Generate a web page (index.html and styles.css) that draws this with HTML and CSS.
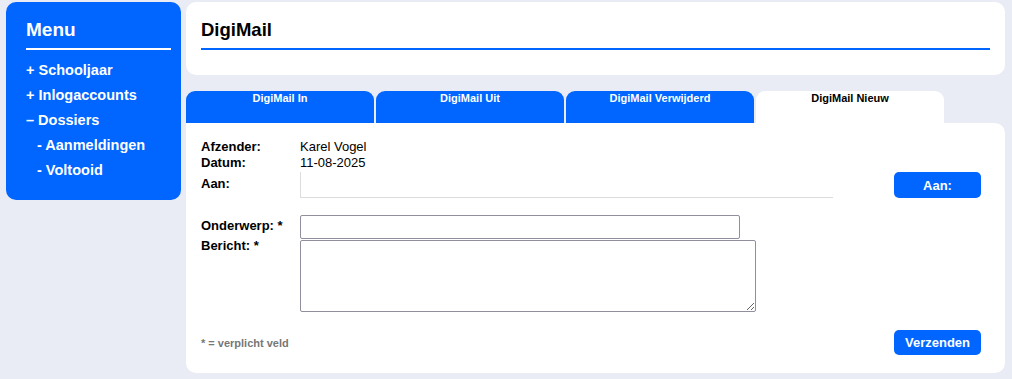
FILE: index.html
```html
<!DOCTYPE html>
<html lang="nl">
<head>
  <meta charset="UTF-8">
  <title>DigiMail Nieuw</title>
  <meta name="viewport" content="width=device-width, initial-scale=1.0">
  <link rel="stylesheet" href="styles.css">
</head>
<body>
  <nav class="sidebar">
    <h2>Menu</h2>
    <ul class="menu">
      <li>+ Schooljaar</li>
      <li>+ Inlogaccounts</li>
      <li>– Dossiers</li>
      <li class="sub">- Aanmeldingen</li>
      <li class="sub">- Voltooid</li>
    </ul>
  </nav>

  <main class="main">
    <section class="header-card">
      <h1>DigiMail</h1>
    </section>

    <div class="tabs">
      <div class="tab">DigiMail In</div>
      <div class="tab">DigiMail Uit</div>
      <div class="tab">DigiMail Verwijderd</div>
      <div class="tab active">DigiMail Nieuw</div>
    </div>

    <form class="mail-card" id="mailForm">
      <div class="info">
        <span class="label">Afzender:</span>
        <span>Karel Vogel</span>
        <span class="label">Datum:</span>
        <span>11-08-2025</span>
      </div>

      <div class="row aan-row">
        <span class="label">Aan:</span>
        <div class="aan-field"></div>
        <button type="button" class="btn">Aan:</button>
      </div>

      <div class="row subject-row">
        <label class="label" for="subject">Onderwerp: *</label>
        <input type="text" id="subject" name="subject">
      </div>

      <div class="row message-row">
        <label class="label" for="message">Bericht: *</label>
        <textarea id="message" name="message"></textarea>
      </div>

      <div class="footer-row">
        <span class="hint">* = verplicht veld</span>
        <button type="submit" class="btn">Verzenden</button>
      </div>
    </form>
  </main>
</body>
</html>
```

FILE: styles.css
```css
body {
  margin: 0;
  padding: 2px 7px 0 6px;
  background-color: #e9ecf5;
  font-family: "Liberation Sans", Arial, sans-serif;
  color: #000;
  display: flex;
  align-items: flex-start;
  gap: 5px;
}

/* sidebar */
.sidebar {
  width: 175px;
  box-sizing: border-box;
  background-color: #0066ff;
  color: #fff;
  border-radius: 10px;
  padding: 16px 10px 17px 20px;
}
.sidebar h2 {
  margin: 0;
  font-size: 19px;
  line-height: 24px;
  padding-bottom: 6px;
  border-bottom: 2px solid #fff;
}
.menu {
  list-style: none;
  margin: 8px 0 0 0;
  padding: 0;
}
.menu li {
  font-size: 14.5px;
  font-weight: bold;
  line-height: 25px;
}
.menu li.sub {
  padding-left: 11px;
}

/* main column */
.main {
  flex: 1;
}
.header-card {
  background-color: #fff;
  border-radius: 10px;
  padding: 17px 15px 25px 15px;
}
.header-card h1 {
  margin: 0;
  font-size: 18.5px;
  line-height: 22px;
  padding-bottom: 7px;
  border-bottom: 2px solid #0066ff;
}

/* tabs */
.tabs {
  display: flex;
  gap: 2px;
  margin-top: 16px;
}
.tab {
  width: 188px;
  height: 32px;
  box-sizing: border-box;
  background-color: #0066ff;
  color: #fff;
  border-radius: 9px 9px 0 0;
  font-size: 11px;
  font-weight: bold;
  text-align: center;
  padding-top: 1px;
  line-height: 13px;
}
.tab.active {
  background-color: #fff;
  color: #000;
}

/* form card */
.mail-card {
  background-color: #fff;
  border-radius: 0 10px 10px 10px;
  padding: 16px 24px 18px 15px;
  font-size: 13px;
}
.label {
  font-weight: bold;
}
.info {
  display: grid;
  grid-template-columns: 99px 1fr;
  line-height: 16px;
}
.row {
  display: flex;
  align-items: flex-start;
}
.row .label {
  width: 99px;
  flex-shrink: 0;
  line-height: 16px;
}
.aan-row {
  margin-top: 1px;
}
.aan-row .label {
  padding-top: 4px;
}
.aan-field {
  width: 532px;
  height: 25px;
  border-left: 1px solid #dcdcdc;
  border-bottom: 1px solid #dcdcdc;
  box-sizing: content-box;
  margin-right: auto;
}
.subject-row {
  margin-top: 17px;
}
.subject-row .label {
  padding-top: 3px;
}
.message-row {
  margin-top: 1px;
}
.message-row .label {
  margin-top: -2px;
}
input,
textarea {
  box-sizing: border-box;
  border: 1px solid #8f8f9d;
  border-radius: 2px;
  font-family: inherit;
  font-size: 13px;
  margin: 0;
  padding: 2px 4px;
}
#subject {
  width: 440px;
  height: 24px;
}
#message {
  width: 456px;
  height: 72px;
}
.footer-row {
  display: flex;
  justify-content: space-between;
  align-items: center;
  margin-top: 18px;
}
.hint {
  font-size: 11px;
  font-weight: bold;
  color: #777;
}
.btn {
  width: 87px;
  height: 26px;
  background-color: #0066ff;
  color: #fff;
  border: none;
  border-radius: 5px;
  font-family: inherit;
  font-size: 13px;
  font-weight: bold;
  padding: 0;
  cursor: pointer;
}
.footer-row .btn {
  height: 25px;
}
.btn:hover {
  background-color: #0057d9;
}
```
